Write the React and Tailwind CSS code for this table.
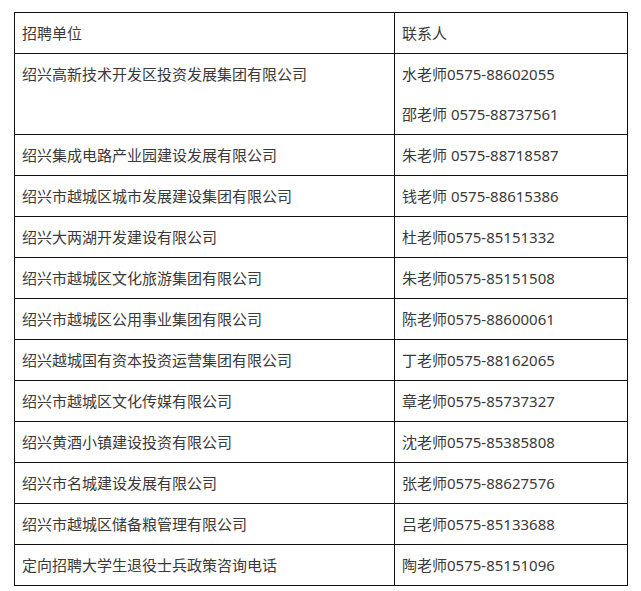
import React from "react";

const rows = [
  ["绍兴集成电路产业园建设发展有限公司", "朱老师 0575-88718587"],
  ["绍兴市越城区城市发展建设集团有限公司", "钱老师 0575-88615386"],
  ["绍兴大两湖开发建设有限公司", "杜老师0575-85151332"],
  ["绍兴市越城区文化旅游集团有限公司", "朱老师0575-85151508"],
  ["绍兴市越城区公用事业集团有限公司", "陈老师0575-88600061"],
  ["绍兴越城国有资本投资运营集团有限公司", "丁老师0575-88162065"],
  ["绍兴市越城区文化传媒有限公司", "章老师0575-85737327"],
  ["绍兴黄酒小镇建设投资有限公司", "沈老师0575-85385808"],
  ["绍兴市名城建设发展有限公司", "张老师0575-88627576"],
  ["绍兴市越城区储备粮管理有限公司", "吕老师0575-85133688"],
  ["定向招聘大学生退役士兵政策咨询电话", "陶老师0575-85151096"],
];

const cell = "border border-[#111] px-[7px] py-[10px] align-top";

export default function App() {
  return (
    <div
      className="w-[641px] h-[591px] bg-white pl-[14px] pt-[12px] text-[15px] leading-[20px] text-[#3a3a3a]"
      style={{ fontFamily: '"Noto Sans", "Noto Sans CJK SC", sans-serif' }}
    >
      <table className="border-collapse w-[614px] table-fixed">
        <colgroup>
          <col className="w-[380px]" />
          <col />
        </colgroup>
        <tbody>
          <tr>
            <td className={cell}>招聘单位</td>
            <td className={cell}>联系人</td>
          </tr>
          <tr>
            <td className={cell}>绍兴高新技术开发区投资发展集团有限公司</td>
            <td className={cell}>
              <div className="flex flex-col gap-[20px]">
                <div>水老师0575-88602055</div>
                <div>邵老师 0575-88737561</div>
              </div>
            </td>
          </tr>
          {rows.map(([a, b]) => (
            <tr key={a}>
              <td className={cell}>{a}</td>
              <td className={cell}>{b}</td>
            </tr>
          ))}
        </tbody>
      </table>
    </div>
  );
}
